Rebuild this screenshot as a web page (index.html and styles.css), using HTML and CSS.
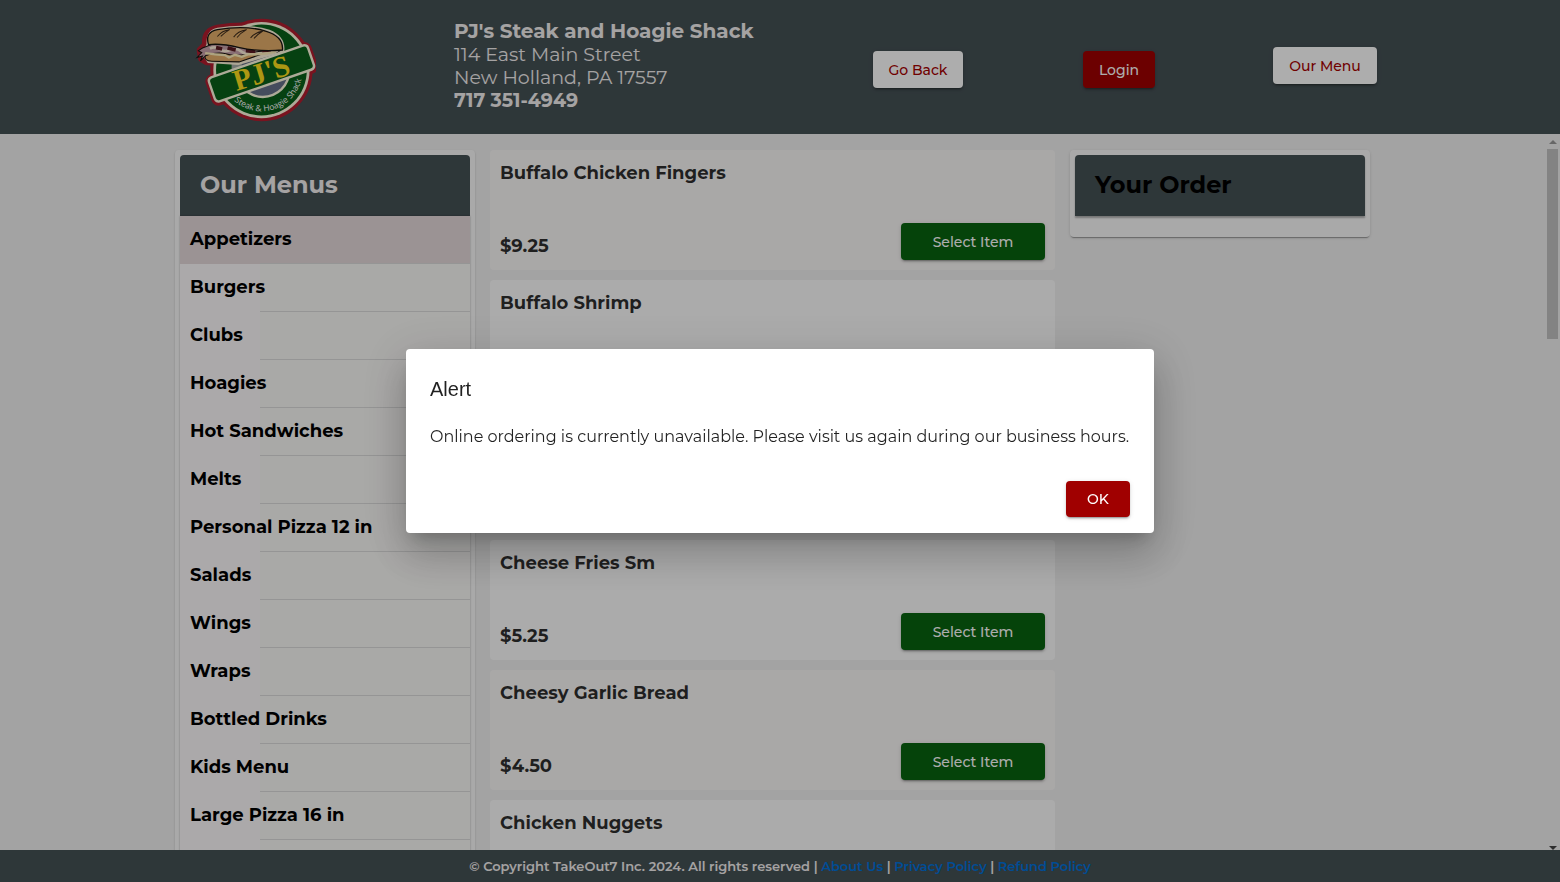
FILE: index.html
```html
<!DOCTYPE html>
<html lang="en">
<head>
    <meta charset="UTF-8">
    <meta name="viewport" content="width=device-width, initial-scale=1.0">
    <title>PJ's Steak and Hoagie Shack</title>
    <link rel="stylesheet" href="styles.css">
</head>
<body>
<header class="header">
    <div class="header-inner">
        <svg class="logo" viewBox="29 21 360 309" role="img" aria-label="PJ's Steak &amp; Hoagie Shack">
            <defs>
                <path id="logo-arc" d="M122 236 A121 121 0 0 0 349 177"/>
            </defs>
            <!-- red outline -->
            <g fill="#b31d2f" stroke="#b31d2f" stroke-width="18" stroke-linejoin="round">
                <circle cx="228" cy="177" r="142"/>
                <rect x="72" y="150" width="312" height="78" rx="12" transform="rotate(-19 228 187)"/>
                <path d="M50 144 L46 118 L62 102 Q58 60 98 52 Q200 36 260 60 Q296 80 290 120 L160 158 L66 154 Z"/>
            </g>
            <!-- badge -->
            <circle cx="228" cy="177" r="142" fill="#fffbe0"/>
            <circle cx="228" cy="177" r="134" fill="#09601a"/>
            <circle cx="232" cy="178" r="82" fill="#fffbe0"/>
            <circle cx="232" cy="178" r="75" fill="#66718a"/>
            <rect x="140" y="150" width="30" height="40" fill="#aab0ac"/>
            <!-- hoagie -->
            <path d="M60 142 Q54 124 66 100 Q64 58 98 52 Q190 38 252 58 Q302 78 295 124 L160 162 L70 156 Z" fill="#fff5dc"/>
            <path d="M62 134 Q58 150 82 151 L162 153 L230 130 L90 125 Z" fill="#e5af6a" stroke="#171410" stroke-width="3"/>
            <path d="M54 112 L42 120 L52 126 L38 140 L54 136 L48 150 L64 134 Q100 122 126 130 T190 128 T250 124 T288 116 L274 104 L90 98 Z" fill="#c9a2ac" stroke="#171410" stroke-width="3"/>
            <path d="M76 114 Q90 106 104 116 T136 118 T168 122 T204 120 T238 122 T278 117" fill="none" stroke="#fff1dc" stroke-width="8"/>
            <path d="M94 111 l18 4 M128 112 l24 6 M182 120 l28 3 M230 120 l26 -2" fill="none" stroke="#5c1a22" stroke-width="11"/>
            <path d="M62 127 Q92 132 120 133 L132 140 L150 132 L170 138 L190 130 Q240 132 270 123" fill="none" stroke="#fff1bd" stroke-width="7"/>
            <path d="M72 102 Q60 66 98 58 Q180 44 240 62 Q294 78 290 118 Q220 124 160 110 Q110 98 72 102 Z" fill="#e5af6a" stroke="#171410" stroke-width="4"/>
            <path d="M98 78 Q112 60 134 58 Q120 66 108 78 M146 80 Q158 62 184 58 Q166 68 156 81 M196 82 Q210 66 232 62 Q216 72 206 84" fill="none" stroke="#3c2a1c" stroke-width="3"/>
            <!-- name banner -->
            <rect x="70" y="146" width="316" height="82" rx="14" fill="#fffbe0" transform="rotate(-19 228 187)"/>
            <rect x="77" y="153" width="302" height="68" rx="9" fill="#09601a" transform="rotate(-19 228 187)"/>
            <text class="logo-name" x="228" y="215" text-anchor="middle" transform="rotate(-17 228 187)">PJ'S</text>
            <text class="logo-tagline"><textPath href="#logo-arc" startOffset="52%" text-anchor="middle">Steak &amp; Hoagie Shack</textPath></text>
        </svg>
        <address class="address">
            <strong>PJ's Steak and Hoagie Shack</strong>
            <span>114 East Main Street</span>
            <span>New Holland, PA 17557</span>
            <strong class="phone">717 351-4949</strong>
        </address>
        <div class="header-cell"><button type="button" class="button button-light">Go Back</button></div>
        <div class="header-cell"><button type="button" class="button button-red">Login</button></div>
        <div class="header-cell header-cell-menu"><button type="button" class="button button-light">Our Menu</button></div>
    </div>
</header>

<div class="viewport">
    <main class="content">
        <nav class="panel menus">
            <h2 class="panel-title">Our Menus</h2>
            <ul class="menu-list">
                <li class="active"><a href="#">Appetizers</a></li>
                <li><a href="#">Burgers</a></li>
                <li><a href="#">Clubs</a></li>
                <li><a href="#">Hoagies</a></li>
                <li><a href="#">Hot Sandwiches</a></li>
                <li><a href="#">Melts</a></li>
                <li><a href="#">Personal Pizza 12 in</a></li>
                <li><a href="#">Salads</a></li>
                <li><a href="#">Wings</a></li>
                <li><a href="#">Wraps</a></li>
                <li><a href="#">Bottled Drinks</a></li>
                <li><a href="#">Kids Menu</a></li>
                <li><a href="#">Large Pizza 16 in</a></li>
                <li></li>
            </ul>
        </nav>
        <section class="items">
            <article class="item item-tint">
                <h3>Buffalo Chicken Fingers</h3>
                <div class="item-row">
                    <span class="price">$9.25</span>
                    <button type="button" class="button button-green">Select Item</button>
                </div>
            </article>
            <article class="item">
                <h3>Buffalo Shrimp</h3>
            </article>
            <article class="item"></article>
            <article class="item">
                <h3>Cheese Fries Sm</h3>
                <div class="item-row">
                    <span class="price">$5.25</span>
                    <button type="button" class="button button-green">Select Item</button>
                </div>
            </article>
            <article class="item item-tint">
                <h3>Cheesy Garlic Bread</h3>
                <div class="item-row">
                    <span class="price">$4.50</span>
                    <button type="button" class="button button-green">Select Item</button>
                </div>
            </article>
            <article class="item">
                <h3>Chicken Nuggets</h3>
            </article>
        </section>
        <aside class="panel order">
            <h2 class="panel-title">Your Order</h2>
        </aside>
    </main>
    <div class="scrollbar" aria-hidden="true">
        <span class="arrow-up"></span>
        <span class="thumb"></span>
        <span class="arrow-down"></span>
    </div>
</div>

<footer class="footer">
    <p>© Copyright TakeOut7 Inc. 2024. All rights reserved | <a href="#">About Us</a> | <a href="#">Privacy Policy</a> | <a href="#">Refund Policy</a></p>
</footer>

<div class="backdrop">
    <div class="dialog" role="alertdialog" aria-labelledby="alert-title" aria-describedby="alert-text">
        <h2 id="alert-title">Alert</h2>
        <p id="alert-text">Online ordering is currently unavailable. Please visit us again during our business hours.</p>
        <div class="dialog-actions">
            <button type="button" class="button button-red">OK</button>
        </div>
    </div>
</div>
</body>
</html>
```

FILE: styles.css
```css
* {
    box-sizing: border-box;
}
body {
    margin: 0;
    height: 100vh;
    display: flex;
    flex-direction: column;
    overflow: hidden;
    font-family: Montserrat, Inter, sans-serif;
    background-color: #f0f0f0;
    color: #000;
}
h2, h3, p, ul {
    margin: 0;
    padding: 0;
}

/* buttons */
.button {
    height: 37px;
    padding: 1px 16px 0;
    border: none;
    border-radius: 4px;
    font-family: inherit;
    font-size: 14px;
    font-weight: 500;
    cursor: pointer;
    box-shadow: 0 3px 1px -2px rgba(0, 0, 0, 0.2), 0 2px 2px rgba(0, 0, 0, 0.14), 0 1px 5px rgba(0, 0, 0, 0.12);
}
.button-light {
    background-color: #fff;
    color: #a60000;
}
.button-red {
    background-color: #a00000;
    color: #fff;
}
.button-green {
    width: 144px;
    background-color: #08640f;
    color: #fff;
}

/* header */
.header {
    flex: none;
    background-color: #455155;
    color: #f4f0f0;
}
.header-inner {
    max-width: 1296px;
    min-height: 134px;
    margin: 0 auto;
    padding-left: 62px;
    display: grid;
    grid-template-columns: 260px 1fr 196px 206px 206px;
    align-items: center;
}
.logo {
    width: 122px;
    height: 105px;
    margin-top: 4px;
}
.logo-name {
    font-family: "Liberation Serif", serif;
    font-size: 88px;
    font-weight: bold;
    fill: #ffdf1c;
}
.logo-tagline {
    font-family: "Open Sans", sans-serif;
    font-size: 25px;
    fill: #fff;
}
.address {
    display: flex;
    flex-direction: column;
    margin-bottom: 2px;
    font-style: normal;
    font-size: 20px;
    line-height: 23px;
}
.address span, .address .phone {
    font-size: 19px;
}
.header-cell {
    display: flex;
    justify-content: center;
    padding-top: 4px;
}
.header-cell-menu {
    padding: 0 0 4px;
}

/* page content */
.viewport {
    flex: 1;
    min-height: 0;
    display: flex;
}
.content {
    flex: 1;
    min-width: 0;
    display: grid;
    grid-template-columns: 300px minmax(0, 565px) 300px;
    justify-content: center;
    align-items: start;
    gap: 15px;
    padding-top: 16px;
    overflow: hidden;
}
.panel {
    padding: 5px;
    background-color: #fafafa;
    border-radius: 4px;
    box-shadow: 0 1px 2px rgba(0, 0, 0, 0.2);
}
.panel-title {
    padding: 15px 20px 17px;
    border-radius: 4px 4px 0 0;
    background-color: #455155;
    font-size: 24px;
    line-height: 29px;
}
.menus .panel-title {
    color: #f4f0f0;
}
.order {
    padding-bottom: 21px;
    box-shadow: 0 2px 1px -1px rgba(0, 0, 0, 0.3), 0 1px 3px rgba(0, 0, 0, 0.14);
}
.order .panel-title {
    box-shadow: 0 2px 2px rgba(0, 0, 0, 0.3);
}
.menu-list {
    list-style: none;
    box-shadow: 0 0 2px rgba(0, 0, 0, 0.3);
}
.menu-list li {
    position: relative;
    height: 48px;
    background: linear-gradient(to right, #fdfafb 80px, #faf9f7 80px);
}
.menu-list li::after {
    content: "";
    position: absolute;
    left: 80px;
    right: 0;
    bottom: 0;
    border-bottom: 1px solid #dcdcdc;
}
.menu-list .active {
    background: #e5d9da;
}
.menu-list a {
    display: block;
    padding: 0 10px;
    color: #000;
    font-size: 18px;
    font-weight: 700;
    line-height: 46px;
    text-decoration: none;
}
.items {
    display: flex;
    flex-direction: column;
    gap: 10px;
    color: rgba(0, 0, 0, 0.82);
}
.item {
    min-height: 120px;
    padding: 10px;
    display: flex;
    flex-direction: column;
    justify-content: space-between;
    background-color: #fdfdfd;
    border-radius: 4px;
}
.item-tint {
    background-color: #faf8f7;
}
.item h3 {
    font-size: 18px;
    font-weight: 700;
    line-height: 26px;
}
.item-row {
    display: flex;
    justify-content: space-between;
    align-items: flex-end;
}
.price {
    font-size: 18px;
    font-weight: 700;
    line-height: 27px;
}

/* scroll bar */
.scrollbar {
    width: 15px;
    display: flex;
    flex-direction: column;
    align-items: center;
    padding-top: 6px;
}
.arrow-up, .arrow-down {
    border: 4px solid transparent;
}
.arrow-up {
    border-top: none;
    border-bottom-color: #999;
}
.arrow-down {
    margin-top: auto;
    border-bottom: none;
    border-top-color: #444;
}
.thumb {
    width: 11px;
    height: 190px;
    margin-top: 5px;
    background-color: #c1c1c1;
}

/* footer */
.footer {
    flex: none;
    background-color: #455155;
    color: #f4f0f0;
    text-align: center;
    font-size: 13px;
    font-weight: 600;
    line-height: 32px;
}
.footer a {
    color: #0071dc;
    text-decoration: none;
}

/* alert */
.backdrop {
    position: fixed;
    inset: 0;
    display: flex;
    align-items: center;
    justify-content: center;
    background-color: rgba(0, 0, 0, 0.32);
}
.dialog {
    min-width: 748px;
    padding: 24px 24px 16px;
    background-color: #fff;
    color: rgba(0, 0, 0, 0.87);
    border-radius: 4px;
    box-shadow: 0 11px 15px -7px rgba(0, 0, 0, 0.2), 0 24px 38px 3px rgba(0, 0, 0, 0.14), 0 9px 46px 8px rgba(0, 0, 0, 0.12);
}
.dialog h2 {
    margin-bottom: 16px;
    font-family: "Liberation Sans", sans-serif;
    font-size: 20px;
    font-weight: 400;
    line-height: 32px;
}
.dialog p {
    font-size: 16px;
    line-height: 32px;
}
.dialog-actions {
    display: flex;
    justify-content: flex-end;
    margin-top: 28px;
}
.dialog .button {
    height: 36px;
    min-width: 64px;
    padding-top: 0;
}
```
